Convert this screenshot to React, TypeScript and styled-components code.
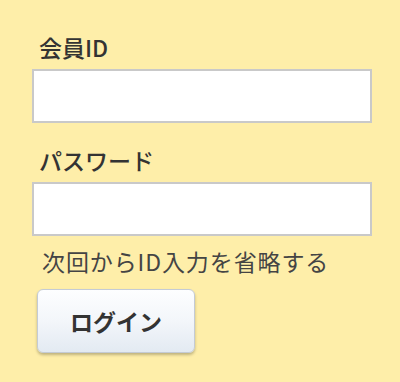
import styled, { createGlobalStyle } from 'styled-components';

const GlobalStyle = createGlobalStyle`
  html, body {
    margin: 0;
    padding: 0;
    background: #feeea9;
  }
  body {
    font-family: 'Noto Sans CJK JP', 'Noto Sans', sans-serif;
    color: #333;
  }
`;

const LoginForm = styled.form`
  display: flex;
  flex-direction: column;
  align-items: flex-start;
  padding: 32px 28px 0 32px;
  height: 382px;
  box-sizing: border-box;
`;

const FieldLabel = styled.label<{ first?: boolean }>`
  display: block;
  margin: ${({ first }) => (first ? '0' : '22px')} 0 6px 7px;
  font-size: 23px;
  line-height: 31px;
  font-weight: 500;
  color: #333;
`;

const TextInput = styled.input`
  box-sizing: border-box;
  width: 340px;
  height: 54px;
  margin: 0;
  border: 2px solid #c9c9c9;
  background: #fff;
  font-size: 20px;
  padding: 0 10px;
  outline: none;
`;

const RememberText = styled.div`
  margin: 10px 0 0 10px;
  font-size: 23px;
  line-height: 31px;
  color: #444;
  letter-spacing: 0.9px;
`;

const LoginButton = styled.button`
  margin: 12px 0 0 5px;
  width: 158px;
  height: 64px;
  box-sizing: border-box;
  border: 1px solid #c4cbd5;
  border-radius: 6px;
  background: linear-gradient(to bottom, #fdfeff 0%, #f3f6fa 50%, #e3eaf2 100%);
  box-shadow: 0 2px 3px rgba(0, 0, 0, 0.25);
  font-family: 'Noto Sans CJK JP', 'Noto Sans', sans-serif;
  font-size: 23px;
  font-weight: 700;
  color: #333;
  cursor: pointer;
`;

const App = () => {
  return (
    <>
      <GlobalStyle />
      <LoginForm onSubmit={e => e.preventDefault()}>
        <FieldLabel first htmlFor='member-id'>
          会員ID
        </FieldLabel>
        <TextInput id='member-id' type='text' />
        <FieldLabel htmlFor='password'>パスワード</FieldLabel>
        <TextInput id='password' type='password' />
        <RememberText>次回からID入力を省略する</RememberText>
        <LoginButton type='submit'>ログイン</LoginButton>
      </LoginForm>
    </>
  );
};

export default App;
